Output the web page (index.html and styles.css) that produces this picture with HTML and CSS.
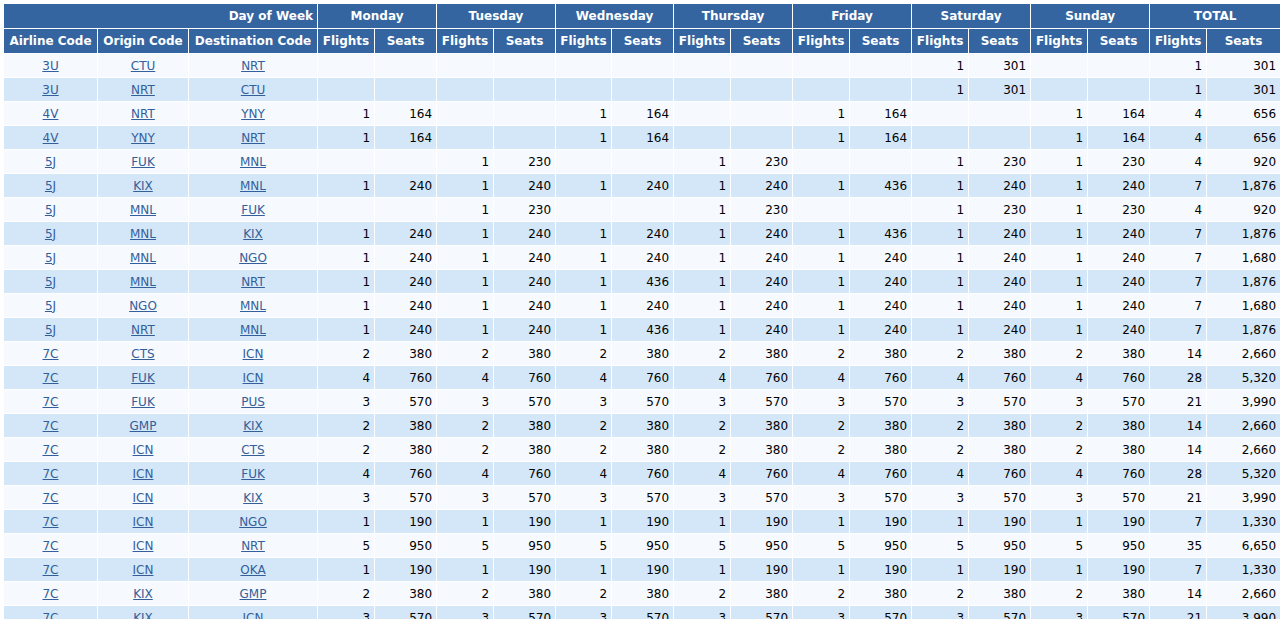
FILE: index.html
```html
<!DOCTYPE html>
<html>
<head>
<meta charset="utf-8">
<link rel="stylesheet" href="styles.css">
</head>
<body>
<table class="grid">
<colgroup>
<col class="c-air"><col class="c-org"><col class="c-dst">
<col class="c-f"><col class="c-s"><col class="c-f"><col class="c-s"><col class="c-f55"><col class="c-s">
<col class="c-f"><col class="c-s"><col class="c-f"><col class="c-s"><col class="c-f"><col class="c-s">
<col class="c-f"><col class="c-s"><col class="c-f"><col class="c-st">
</colgroup>
<thead>
<tr class="h1">
<th colspan="3" class="dow">Day of Week</th>
<th colspan="2">Monday</th><th colspan="2">Tuesday</th><th colspan="2">Wednesday</th><th colspan="2">Thursday</th>
<th colspan="2">Friday</th><th colspan="2">Saturday</th><th colspan="2">Sunday</th><th colspan="2">TOTAL</th>
</tr>
<tr class="h2">
<th>Airline Code</th><th>Origin Code</th><th>Destination Code</th>
<th>Flights</th><th>Seats</th><th>Flights</th><th>Seats</th><th>Flights</th><th>Seats</th><th>Flights</th><th>Seats</th>
<th>Flights</th><th>Seats</th><th>Flights</th><th>Seats</th><th>Flights</th><th>Seats</th><th>Flights</th><th>Seats</th>
</tr>
</thead>
<tbody>
<tr><td class="k"><a href="#">3U</a></td><td class="k"><a href="#">CTU</a></td><td class="k"><a href="#">NRT</a></td><td></td><td></td><td></td><td></td><td></td><td></td><td></td><td></td><td></td><td></td><td>1</td><td>301</td><td></td><td></td><td>1</td><td>301</td></tr>
<tr><td class="k"><a href="#">3U</a></td><td class="k"><a href="#">NRT</a></td><td class="k"><a href="#">CTU</a></td><td></td><td></td><td></td><td></td><td></td><td></td><td></td><td></td><td></td><td></td><td>1</td><td>301</td><td></td><td></td><td>1</td><td>301</td></tr>
<tr><td class="k"><a href="#">4V</a></td><td class="k"><a href="#">NRT</a></td><td class="k"><a href="#">YNY</a></td><td>1</td><td>164</td><td></td><td></td><td>1</td><td>164</td><td></td><td></td><td>1</td><td>164</td><td></td><td></td><td>1</td><td>164</td><td>4</td><td>656</td></tr>
<tr><td class="k"><a href="#">4V</a></td><td class="k"><a href="#">YNY</a></td><td class="k"><a href="#">NRT</a></td><td>1</td><td>164</td><td></td><td></td><td>1</td><td>164</td><td></td><td></td><td>1</td><td>164</td><td></td><td></td><td>1</td><td>164</td><td>4</td><td>656</td></tr>
<tr><td class="k"><a href="#">5J</a></td><td class="k"><a href="#">FUK</a></td><td class="k"><a href="#">MNL</a></td><td></td><td></td><td>1</td><td>230</td><td></td><td></td><td>1</td><td>230</td><td></td><td></td><td>1</td><td>230</td><td>1</td><td>230</td><td>4</td><td>920</td></tr>
<tr><td class="k"><a href="#">5J</a></td><td class="k"><a href="#">KIX</a></td><td class="k"><a href="#">MNL</a></td><td>1</td><td>240</td><td>1</td><td>240</td><td>1</td><td>240</td><td>1</td><td>240</td><td>1</td><td>436</td><td>1</td><td>240</td><td>1</td><td>240</td><td>7</td><td>1,876</td></tr>
<tr><td class="k"><a href="#">5J</a></td><td class="k"><a href="#">MNL</a></td><td class="k"><a href="#">FUK</a></td><td></td><td></td><td>1</td><td>230</td><td></td><td></td><td>1</td><td>230</td><td></td><td></td><td>1</td><td>230</td><td>1</td><td>230</td><td>4</td><td>920</td></tr>
<tr><td class="k"><a href="#">5J</a></td><td class="k"><a href="#">MNL</a></td><td class="k"><a href="#">KIX</a></td><td>1</td><td>240</td><td>1</td><td>240</td><td>1</td><td>240</td><td>1</td><td>240</td><td>1</td><td>436</td><td>1</td><td>240</td><td>1</td><td>240</td><td>7</td><td>1,876</td></tr>
<tr><td class="k"><a href="#">5J</a></td><td class="k"><a href="#">MNL</a></td><td class="k"><a href="#">NGO</a></td><td>1</td><td>240</td><td>1</td><td>240</td><td>1</td><td>240</td><td>1</td><td>240</td><td>1</td><td>240</td><td>1</td><td>240</td><td>1</td><td>240</td><td>7</td><td>1,680</td></tr>
<tr><td class="k"><a href="#">5J</a></td><td class="k"><a href="#">MNL</a></td><td class="k"><a href="#">NRT</a></td><td>1</td><td>240</td><td>1</td><td>240</td><td>1</td><td>436</td><td>1</td><td>240</td><td>1</td><td>240</td><td>1</td><td>240</td><td>1</td><td>240</td><td>7</td><td>1,876</td></tr>
<tr><td class="k"><a href="#">5J</a></td><td class="k"><a href="#">NGO</a></td><td class="k"><a href="#">MNL</a></td><td>1</td><td>240</td><td>1</td><td>240</td><td>1</td><td>240</td><td>1</td><td>240</td><td>1</td><td>240</td><td>1</td><td>240</td><td>1</td><td>240</td><td>7</td><td>1,680</td></tr>
<tr><td class="k"><a href="#">5J</a></td><td class="k"><a href="#">NRT</a></td><td class="k"><a href="#">MNL</a></td><td>1</td><td>240</td><td>1</td><td>240</td><td>1</td><td>436</td><td>1</td><td>240</td><td>1</td><td>240</td><td>1</td><td>240</td><td>1</td><td>240</td><td>7</td><td>1,876</td></tr>
<tr><td class="k"><a href="#">7C</a></td><td class="k"><a href="#">CTS</a></td><td class="k"><a href="#">ICN</a></td><td>2</td><td>380</td><td>2</td><td>380</td><td>2</td><td>380</td><td>2</td><td>380</td><td>2</td><td>380</td><td>2</td><td>380</td><td>2</td><td>380</td><td>14</td><td>2,660</td></tr>
<tr><td class="k"><a href="#">7C</a></td><td class="k"><a href="#">FUK</a></td><td class="k"><a href="#">ICN</a></td><td>4</td><td>760</td><td>4</td><td>760</td><td>4</td><td>760</td><td>4</td><td>760</td><td>4</td><td>760</td><td>4</td><td>760</td><td>4</td><td>760</td><td>28</td><td>5,320</td></tr>
<tr><td class="k"><a href="#">7C</a></td><td class="k"><a href="#">FUK</a></td><td class="k"><a href="#">PUS</a></td><td>3</td><td>570</td><td>3</td><td>570</td><td>3</td><td>570</td><td>3</td><td>570</td><td>3</td><td>570</td><td>3</td><td>570</td><td>3</td><td>570</td><td>21</td><td>3,990</td></tr>
<tr><td class="k"><a href="#">7C</a></td><td class="k"><a href="#">GMP</a></td><td class="k"><a href="#">KIX</a></td><td>2</td><td>380</td><td>2</td><td>380</td><td>2</td><td>380</td><td>2</td><td>380</td><td>2</td><td>380</td><td>2</td><td>380</td><td>2</td><td>380</td><td>14</td><td>2,660</td></tr>
<tr><td class="k"><a href="#">7C</a></td><td class="k"><a href="#">ICN</a></td><td class="k"><a href="#">CTS</a></td><td>2</td><td>380</td><td>2</td><td>380</td><td>2</td><td>380</td><td>2</td><td>380</td><td>2</td><td>380</td><td>2</td><td>380</td><td>2</td><td>380</td><td>14</td><td>2,660</td></tr>
<tr><td class="k"><a href="#">7C</a></td><td class="k"><a href="#">ICN</a></td><td class="k"><a href="#">FUK</a></td><td>4</td><td>760</td><td>4</td><td>760</td><td>4</td><td>760</td><td>4</td><td>760</td><td>4</td><td>760</td><td>4</td><td>760</td><td>4</td><td>760</td><td>28</td><td>5,320</td></tr>
<tr><td class="k"><a href="#">7C</a></td><td class="k"><a href="#">ICN</a></td><td class="k"><a href="#">KIX</a></td><td>3</td><td>570</td><td>3</td><td>570</td><td>3</td><td>570</td><td>3</td><td>570</td><td>3</td><td>570</td><td>3</td><td>570</td><td>3</td><td>570</td><td>21</td><td>3,990</td></tr>
<tr><td class="k"><a href="#">7C</a></td><td class="k"><a href="#">ICN</a></td><td class="k"><a href="#">NGO</a></td><td>1</td><td>190</td><td>1</td><td>190</td><td>1</td><td>190</td><td>1</td><td>190</td><td>1</td><td>190</td><td>1</td><td>190</td><td>1</td><td>190</td><td>7</td><td>1,330</td></tr>
<tr><td class="k"><a href="#">7C</a></td><td class="k"><a href="#">ICN</a></td><td class="k"><a href="#">NRT</a></td><td>5</td><td>950</td><td>5</td><td>950</td><td>5</td><td>950</td><td>5</td><td>950</td><td>5</td><td>950</td><td>5</td><td>950</td><td>5</td><td>950</td><td>35</td><td>6,650</td></tr>
<tr><td class="k"><a href="#">7C</a></td><td class="k"><a href="#">ICN</a></td><td class="k"><a href="#">OKA</a></td><td>1</td><td>190</td><td>1</td><td>190</td><td>1</td><td>190</td><td>1</td><td>190</td><td>1</td><td>190</td><td>1</td><td>190</td><td>1</td><td>190</td><td>7</td><td>1,330</td></tr>
<tr><td class="k"><a href="#">7C</a></td><td class="k"><a href="#">KIX</a></td><td class="k"><a href="#">GMP</a></td><td>2</td><td>380</td><td>2</td><td>380</td><td>2</td><td>380</td><td>2</td><td>380</td><td>2</td><td>380</td><td>2</td><td>380</td><td>2</td><td>380</td><td>14</td><td>2,660</td></tr>
<tr><td class="k"><a href="#">7C</a></td><td class="k"><a href="#">KIX</a></td><td class="k"><a href="#">ICN</a></td><td>3</td><td>570</td><td>3</td><td>570</td><td>3</td><td>570</td><td>3</td><td>570</td><td>3</td><td>570</td><td>3</td><td>570</td><td>3</td><td>570</td><td>21</td><td>3,990</td></tr>
</tbody>
</table>
</body>
</html>
```
FILE: styles.css
```css
html, body {
  margin: 0;
  padding: 0;
  background: #ffffff;
}
body {
  padding: 3px;
  font-family: "DejaVu Sans", Verdana, sans-serif;
  font-size: 12px;
  color: #000000;
}
.grid {
  table-layout: fixed;
  width: 1278px;
  border-collapse: separate;
  border-spacing: 1px;
  background: #ffffff;
}
.c-air { width: 93px; }
.c-org { width: 90px; }
.c-dst { width: 128px; }
.c-f { width: 56px; }
.c-f55 { width: 55px; }
.c-s { width: 61px; }
.c-st { width: 73px; }
.grid th {
  background: #3465a0;
  color: #ffffff;
  font-weight: bold;
  height: 24px;
  padding: 0 4px;
  box-sizing: border-box;
  white-space: nowrap;
  overflow: hidden;
  text-align: center;
  vertical-align: middle;
}
.grid th.dow {
  text-align: right;
}
.grid td {
  height: 23px;
  padding: 0 4px;
  box-sizing: border-box;
  white-space: nowrap;
  overflow: hidden;
  text-align: right;
  vertical-align: middle;
}
.grid tbody tr:nth-child(odd) td {
  background: #f6f9fd;
}
.grid tbody tr:nth-child(even) td {
  background: #d4e7f8;
}
.grid td.k {
  text-align: center;
}
.grid td.k a {
  color: #33609b;
  text-decoration: underline;
}
```
